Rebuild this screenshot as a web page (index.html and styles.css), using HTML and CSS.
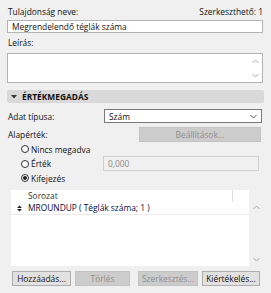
FILE: index.html
```html
<!DOCTYPE html>
<html>
<head>
<meta charset="utf-8">
<link rel="stylesheet" href="styles.css">
</head>
<body>
<div class="panel">
  <div class="toprow">
    <span>Tulajdonság neve:</span>
    <span>Szerkeszthető: 1</span>
  </div>
  <div class="field name">Megrendelendő téglák száma</div>
  <div class="label desc-label">Leírás:</div>
  <div class="field textarea">
    <div class="vscroll">
      <svg width="7" height="5" viewBox="0 0 7 5"><path d="M0.5 4 L3.5 1 L6.5 4" fill="none" stroke="#a8a8a8" stroke-width="1"/></svg>
      <svg width="7" height="5" viewBox="0 0 7 5"><path d="M0.5 1 L3.5 4 L6.5 1" fill="none" stroke="#a8a8a8" stroke-width="1"/></svg>
    </div>
  </div>
  <div class="section">
    <svg class="tri" width="6" height="4" viewBox="0 0 6 4"><path d="M0 0 H6 L3 3.5 Z" fill="#333"/></svg>
    <span>ÉRTÉKMEGADÁS</span>
  </div>
  <div class="row type-row">
    <span class="lbl">Adat típusa:</span>
    <div class="select">
      <span>Szám</span>
      <svg width="7" height="5" viewBox="0 0 7 5"><path d="M0.5 1 L3.5 4 L6.5 1" fill="none" stroke="#555" stroke-width="1"/></svg>
    </div>
  </div>
  <div class="row def-row">
    <span class="lbl">Alapérték:</span>
    <div class="btn disabled wide">Beállítások...</div>
  </div>
  <div class="radios">
    <div class="radio-row"><span class="radio"></span><span>Nincs megadva</span></div>
    <div class="radio-row val"><span class="radio"></span><span class="rlabel">Érték</span><div class="valbox">0,000</div></div>
    <div class="radio-row"><span class="radio checked"></span><span>Kifejezés</span></div>
  </div>
  <div class="tablewrap">
    <div class="table">
      <div class="thead">
        <div class="c1"></div>
        <div class="c2">Sorozat</div>
        <div class="c3"></div>
      </div>
      <div class="trow">
        <div class="c1"><svg width="5" height="7" viewBox="0 0 5 7"><path d="M0 3 L2.5 0.5 L5 3 Z M0 4 L2.5 6.5 L5 4 Z" fill="#222"/></svg></div>
        <div class="c2">MROUNDUP ( Téglák száma; 1 )</div>
      </div>
    </div>
    <div class="tscroll">
      <svg width="7" height="5" viewBox="0 0 7 5"><path d="M0.5 4 L3.5 1 L6.5 4" fill="none" stroke="#a8a8a8" stroke-width="1"/></svg>
      <svg width="7" height="5" viewBox="0 0 7 5"><path d="M0.5 1 L3.5 4 L6.5 1" fill="none" stroke="#a8a8a8" stroke-width="1"/></svg>
    </div>
  </div>
  <div class="buttons">
    <div class="btn b1">Hozzáadás...</div>
    <div class="btn disabled b2">Törlés</div>
    <div class="btn disabled b3">Szerkesztés...</div>
    <div class="btn b4">Kiértékelés...</div>
  </div>
</div>
</body>
</html>
```
FILE: styles.css
```css
* { box-sizing: border-box; }
html, body { margin: 0; padding: 0; }
body {
  background: #f0f0f0;
  font-family: "Open Sans", "Noto Sans", sans-serif;
  font-size: 8.4px;
  color: #111;
  width: 271px;
  height: 293px;
  overflow: hidden;
}
.panel { padding: 5px 7px 0 7px; display: flex; flex-direction: column; }
.toprow { display: flex; justify-content: space-between; height: 14px; line-height: 14px; padding: 0 1px; }
.field { background: #fff; border: 1px solid #b4b4b4; }
.name { height: 13px; line-height: 11px; padding-left: 4px; width: 256px; margin-top: 1px; }
.desc-label { height: 20px; line-height: 20px; padding-left: 1px; }
.textarea { height: 30px; width: 256px; display: flex; justify-content: flex-end; }
.vscroll { width: 14px; display: flex; flex-direction: column; justify-content: space-between; align-items: center; padding: 5px 0 4px; }
.vscroll svg { display: block; }
.section { margin-top: 7px; height: 13px; width: 257px; background: #d9d9d9; border-radius: 2px; display: flex; align-items: center; padding-left: 4px; gap: 5px; font-weight: 700; }
.tri { display: block; }
.row { display: flex; align-items: center; justify-content: space-between; }
.lbl { padding-left: 1px; }
.type-row { margin-top: 6px; height: 14px; }
.select { width: 158px; height: 14px; margin-right: 2px; background: #fff; border: 1px solid #7a7a7a; display: flex; align-items: center; justify-content: space-between; padding: 0 4px 0 4px; }
.select svg { display: block; }
.def-row { margin-top: 4px; height: 15px; }
.btn { height: 15px; line-height: 13px; text-align: center; border: 1px solid #adadad; background: #e1e1e1; color: #111; }
.btn.disabled { background: #cccccc; border-color: #c4c4c4; color: #8f8f8f; }
.wide { width: 122px; margin-right: 3px; }
.radios { display: flex; flex-direction: column; padding-left: 14px; }
.radio-row { display: flex; align-items: center; height: 14px; gap: 2px; }
.radio-row.val { height: 15px; }
.radio { width: 8px; height: 8px; border-radius: 50%; border: 1px solid #333; background: #fff; position: relative; }
.radio.checked::after { content: ""; position: absolute; left: 1px; top: 1px; width: 4px; height: 4px; border-radius: 50%; background: #222; }
.rlabel { width: 70px; }
.valbox { width: 156px; height: 15px; border: 1px solid #cfcfcf; background: #f0f0f0; color: #8a8a8a; line-height: 13px; padding-left: 4px; }
.tablewrap { margin-top: 5px; display: flex; height: 76px; padding-left: 4px; }
.table { width: 238px; background: #fff; display: flex; flex-direction: column; }
.thead { display: flex; height: 12px; line-height: 12px; }
.thead .c2 { flex: 1; border-right: 1px solid #dcdcdc; color: #333; }
.thead .c3 { width: 16px; }
.c1 { width: 17px; display: flex; align-items: center; justify-content: center; }
.c1 svg { display: block; }
.trow { display: flex; height: 13px; line-height: 12px; border-bottom: 1px solid #ececec; color: #0a0a3a; }
.trow .c2 { flex: 1; }
.tscroll { width: 14px; display: flex; flex-direction: column; justify-content: space-between; align-items: center; padding: 15px 0 4px; }
.tscroll svg { display: block; }
.buttons { display: flex; margin-top: 5px; padding-left: 5px; gap: 4px; }
.b1 { width: 59px; }
.b2 { width: 55px; }
.b3 { width: 60px; margin-left: 4px; }
.b4 { width: 58px; }
```
